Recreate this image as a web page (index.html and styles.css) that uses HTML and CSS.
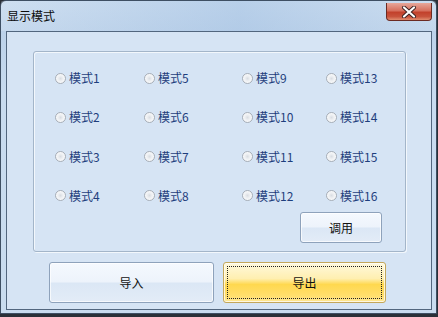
FILE: index.html
```html
<!DOCTYPE html>
<html>
<head>
<meta charset="utf-8">
<link rel="stylesheet" href="styles.css">
</head>
<body>
<div class="window">
  <div class="titlebar">
    <span class="title">显示模式</span>
    <div class="close">
      <svg width="18" height="12" viewBox="0 0 18 12">
        <path d="M4 1.5 L14 10.5 M14 1.5 L4 10.5" stroke="#3a2020" stroke-width="4" stroke-linecap="round"/>
        <path d="M4 1.5 L14 10.5 M14 1.5 L4 10.5" stroke="#ffffff" stroke-width="2.2" stroke-linecap="round"/>
      </svg>
    </div>
  </div>
  <div class="client">
    <div class="group">
      <div class="grid">
        <label class="opt"><span class="radio"></span>模式1</label>
        <label class="opt"><span class="radio"></span>模式5</label>
        <label class="opt"><span class="radio"></span>模式9</label>
        <label class="opt"><span class="radio"></span>模式13</label>
        <label class="opt"><span class="radio"></span>模式2</label>
        <label class="opt"><span class="radio"></span>模式6</label>
        <label class="opt"><span class="radio"></span>模式10</label>
        <label class="opt"><span class="radio"></span>模式14</label>
        <label class="opt"><span class="radio"></span>模式3</label>
        <label class="opt"><span class="radio"></span>模式7</label>
        <label class="opt"><span class="radio"></span>模式11</label>
        <label class="opt"><span class="radio"></span>模式15</label>
        <label class="opt"><span class="radio"></span>模式4</label>
        <label class="opt"><span class="radio"></span>模式8</label>
        <label class="opt"><span class="radio"></span>模式12</label>
        <label class="opt"><span class="radio"></span>模式16</label>
      </div>
      <div class="apply-row">
        <button class="btn apply">调用</button>
      </div>
    </div>
    <div class="actions">
      <button class="btn big">导入</button>
      <button class="btn big focus"><span class="focus-ring">导出</span></button>
    </div>
  </div>
</div>
</body>
</html>
```
FILE: styles.css
```css
html, body {
  margin: 0;
  padding: 0;
}
body {
  width: 438px;
  height: 317px;
  background: #2a3038;
  overflow: hidden;
  font-family: "Noto Sans CJK SC", "Liberation Sans", sans-serif;
  font-size: 12px;
}
.window {
  width: 437px;
  height: 314px;
  box-sizing: border-box;
  border: 1px solid #3e4f63;
  border-radius: 6px 6px 0 0;
  background: linear-gradient(180deg, #c5d9ee 0%, #bcd2ea 10%, #c8dbef 30%, #c9dcef 100%);
  display: flex;
  flex-direction: column;
}
.titlebar {
  height: 30px;
  display: flex;
  justify-content: space-between;
  align-items: flex-start;
  padding: 0 4px 0 6px;
  background: linear-gradient(90deg, rgba(255,255,255,0.15), rgba(160,190,225,0.35) 55%, rgba(255,255,255,0.1));
}
.title {
  margin-top: 7px;
  color: #0c0c0c;
  font-size: 12px;
  line-height: 16px;
}
.close {
  margin-top: 2px;
  width: 46px;
  height: 18px;
  box-sizing: border-box;
  border: 1px solid #6b2a22;
  border-top: none;
  border-radius: 0 0 4px 4px;
  background: linear-gradient(180deg, #e7a79a 0%, #d6705e 45%, #c2412c 55%, #c8533c 80%, #e08d70 100%);
  display: flex;
  align-items: center;
  justify-content: center;
}
.client {
  margin: 0 4px 0 5px;
  height: 279px;
  box-sizing: border-box;
  border: 1px solid #52667e;
  background: #d6e4f4;
  padding: 19px 0 0 26px;
}
.group {
  width: 373px;
  height: 201px;
  box-sizing: border-box;
  border: 1px solid #a3b5c9;
  border-radius: 3px;
  box-shadow: inset 1px 1px 0 #f2f7fc, 1px 1px 0 #f2f7fc;
  padding: 18px 0 0 21px;
  display: flex;
  flex-direction: column;
}
.grid {
  display: grid;
  grid-template-columns: 89px 98px 84px auto;
  grid-auto-rows: 16px;
  row-gap: 23.3px;
}
.opt {
  display: flex;
  align-items: center;
  color: #1f3e7c;
  font-size: 12px;
  line-height: 16px;
  white-space: nowrap;
}
.radio {
  width: 11px;
  height: 11px;
  box-sizing: border-box;
  border-radius: 50%;
  border: 1px solid #a7aeb7;
  background: radial-gradient(circle at 50% 50%, #d9dde2 0, #eceef1 35%, #f8f9fa 70%, #dfe3e8 100%);
  margin-right: 3px;
  flex: none;
}
.apply-row {
  display: flex;
  justify-content: flex-end;
  padding-right: 23px;
  margin-top: 8px;
}
.btn {
  font-family: "Noto Sans CJK SC", "Liberation Sans", sans-serif;
  font-size: 12px;
  color: #111;
  box-sizing: border-box;
  border: 1px solid #8ea2bb;
  border-radius: 3px;
  background: linear-gradient(180deg, #f5f9fe 0%, #edf3fb 48%, #dbe7f5 52%, #e3ecf7 100%);
  box-shadow: inset 0 0 0 1px rgba(255,255,255,0.7);
  padding: 0;
  display: flex;
  align-items: center;
  justify-content: center;
}
.apply {
  width: 82px;
  height: 31px;
}
.actions {
  display: flex;
  gap: 9px;
  margin: 10px 0 0 16px;
}
.big {
  width: 165px;
  height: 41px;
}
.big.focus {
  width: 163px;
  border-color: #c4a75a;
  background: linear-gradient(180deg, #fff9dd 0%, #ffefb0 40%, #ffd84f 55%, #ffdf6e 85%, #ffe99a 100%);
  padding: 3px;
}
.focus-ring {
  width: 100%;
  height: 100%;
  box-sizing: border-box;
  border: 1px dotted #222;
  display: flex;
  align-items: center;
  justify-content: center;
}
```
